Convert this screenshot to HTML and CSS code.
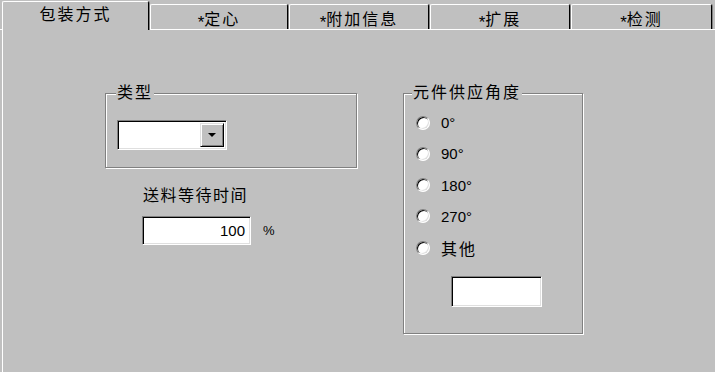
FILE: index.html
```html
<!DOCTYPE html>
<html lang="zh">
<head>
  <meta charset="UTF-8">
  <title>包装方式</title>
  <link rel="stylesheet" href="styles.css">
</head>
<body>

  <div class="tabs">
    <div class="tab active">包装方式</div>
    <div class="tab tab2"><span class="star">*</span>定心</div>
    <div class="tab tab3"><span class="star">*</span>附加信息</div>
    <div class="tab tab4"><span class="star">*</span>扩展</div>
    <div class="tab tab5"><span class="star">*</span>检测</div>
  </div>

  <div class="page">
    <div class="left-col">
      <fieldset class="group type-group">
        <legend>类型</legend>
        <div class="combo">
          <div class="combo-text"></div>
          <div class="combo-btn"><span class="arrow"></span></div>
        </div>
      </fieldset>

      <div class="wait-label">送料等待时间</div>
      <div class="wait-row">
        <div class="edit wait-edit">100</div>
        <span class="unit">%</span>
      </div>
    </div>

    <fieldset class="group angle-group">
      <legend>元件供应角度</legend>
      <div class="radio-row"><span class="radio"></span><span class="radio-text">0°</span></div>
      <div class="radio-row"><span class="radio"></span><span class="radio-text">90°</span></div>
      <div class="radio-row"><span class="radio"></span><span class="radio-text">180°</span></div>
      <div class="radio-row"><span class="radio"></span><span class="radio-text">270°</span></div>
      <div class="radio-row"><span class="radio"></span><span class="radio-text cjk">其他</span></div>
      <div class="edit other-edit"></div>
    </fieldset>
  </div>

</body>
</html>
```

FILE: styles.css
```css
body {
  margin: 0;
  width: 715px;
  height: 372px;
  overflow: hidden;
  background: #c0c0c0;
  color: #000;
  font-family: "Liberation Sans", "Noto Sans CJK SC", sans-serif;
  font-size: 16px;
}
.tabs {
  display: flex;
  align-items: flex-end;
  gap: 1px;
  height: 30px;
  box-sizing: border-box;
  padding-left: 2px;
  border-bottom: 1px solid #fff;
}
.tab {
  box-sizing: border-box;
  height: 25px;
  padding-top: 6px;
  border-top: 1px solid #fff;
  border-left: 1px solid #fff;
  border-right: 1px solid #000;
  border-radius: 2px 2px 0 0;
  box-shadow: 1px 0 0 #808080;
  background: #c0c0c0;
  text-align: center;
  line-height: 18px;
  letter-spacing: 2px;
}
.tab.active {
  width: 147px;
  height: 29px;
  margin-bottom: -1px;
  padding-top: 4px;
}
.tab2 { width: 138px; }
.tab3 { width: 140px; }
.tab4 { width: 140px; }
.tab5 { width: 141px; }
.star {
  vertical-align: -3px;
  font-size: 17px;
  letter-spacing: 0;
}

.page {
  display: flex;
  align-items: flex-start;
  margin-left: 2px;
  height: 342px;
  box-sizing: border-box;
  border-left: 1px solid #fff;
  padding-left: 102px;
  padding-top: 53px;
}
.group {
  box-sizing: border-box;
  margin: 0;
  padding: 0 11px;
  min-width: 0;
  border: 1px solid #808080;
  box-shadow: inset 1px 1px 0 #fff, 1px 1px 0 #fff;
}
.group legend {
  padding: 0 1px;
  margin-left: -1px;
  background: #c0c0c0;
  line-height: 20px;
  letter-spacing: 2px;
}
.left-col {
  width: 252px;
}
.type-group {
  width: 252px;
  height: 85px;
}
.combo {
  display: flex;
  width: 110px;
  height: 30px;
  margin-top: 17px;
  box-sizing: border-box;
  padding: 2px;
  background: #fff;
  border: 1px solid;
  border-color: #808080 #fff #fff #808080;
  box-shadow: inset 1px 1px 0 #000, inset -1px -1px 0 #dfdfdf;
}
.combo-text {
  flex: 1;
}
.combo-btn {
  display: flex;
  align-items: center;
  justify-content: center;
  width: 24px;
  box-sizing: border-box;
  background: #c0c0c0;
  border: 1px solid;
  border-color: #dfdfdf #000 #000 #dfdfdf;
  box-shadow: inset 1px 1px 0 #fff, inset -1px -1px 0 #808080;
}
.arrow {
  width: 0;
  height: 0;
  border-left: 4px solid transparent;
  border-right: 4px solid transparent;
  border-top: 4px solid #000;
}
.wait-label {
  margin: 18px 0 0 38px;
  line-height: 20px;
  letter-spacing: 1.5px;
}
.wait-row {
  display: flex;
  align-items: center;
  margin: 10px 0 0 37px;
}
.edit {
  box-sizing: border-box;
  background: #fff;
  border: 1px solid;
  border-color: #808080 #fff #fff #808080;
  box-shadow: inset 1px 1px 0 #000, inset -1px -1px 0 #dfdfdf;
}
.wait-edit {
  width: 109px;
  height: 29px;
  padding: 0 5px;
  text-align: right;
  font-size: 15px;
  line-height: 27px;
}
.unit {
  margin-left: 12px;
  font-size: 13px;
}
.angle-group {
  width: 180px;
  height: 251px;
  margin-left: 46px;
  padding: 0 9px;
}
.radio-row {
  display: flex;
  align-items: center;
  height: 31.25px;
  margin-left: 3px;
}
.radio-row:first-of-type {
  margin-top: 4px;
}
.radio {
  width: 14px;
  height: 14px;
  box-sizing: border-box;
  border-radius: 50%;
  background: #fff;
  border: 1px solid;
  border-color: #808080 #fff #fff #808080;
  box-shadow: inset 1px 1px 0 #000, inset -1px -1px 0 #dfdfdf;
}
.radio-text {
  margin-left: 11px;
  font-size: 15px;
}
.radio-text.cjk {
  font-size: 16px;
  letter-spacing: 2px;
}
.other-edit {
  width: 91px;
  height: 31px;
  margin: 13px 0 0 38px;
}
```
